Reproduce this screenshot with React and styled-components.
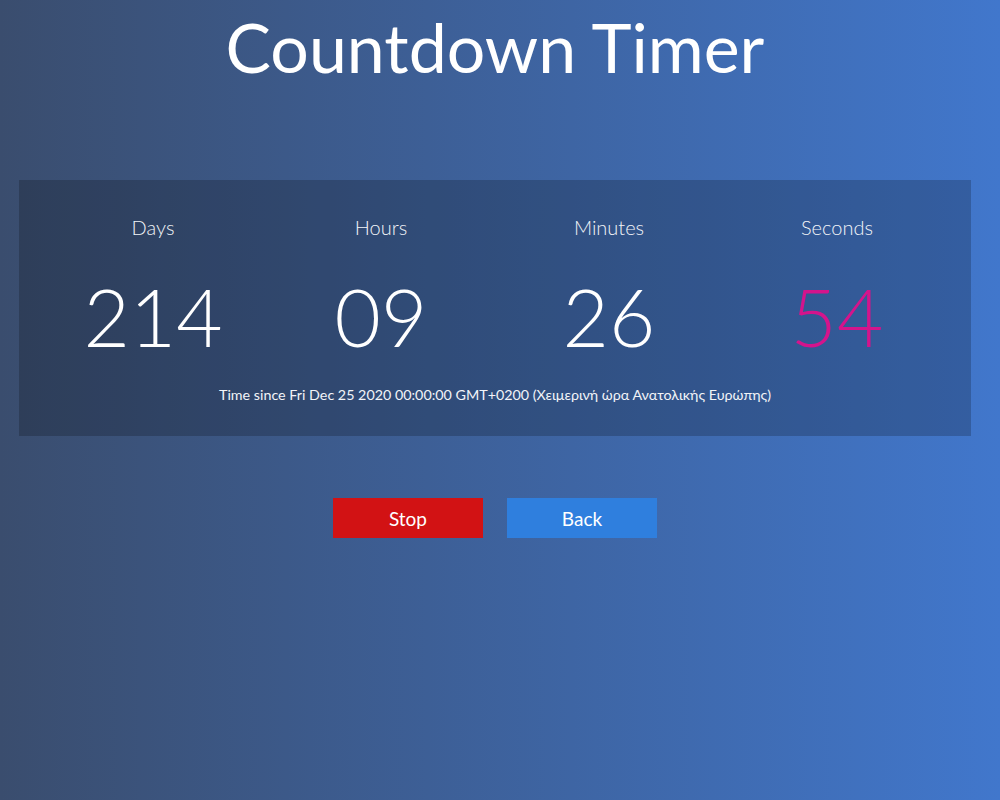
import React from 'react';
import styled, { createGlobalStyle } from 'styled-components';

const GlobalStyle = createGlobalStyle`
  html, body {
    margin: 0;
    padding: 0;
  }
  body {
    font-family: 'Lato', 'Noto Sans', sans-serif;
    color: #fff;
  }
`;

const Page = styled.div`
  min-height: 100vh;
  background: linear-gradient(to right, #3a4d6e, #4177cc);
  padding-right: 10px;
  box-sizing: border-box;
  overflow: hidden;
`;

const Title = styled.h1`
  margin: 8px 0 0;
  font-family: 'Lato', sans-serif;
  font-weight: 400;
  font-size: 68px;
  line-height: 78px;
  text-align: center;
  color: #fff;
`;

const Panel = styled.section`
  margin: 94px 19px 0;
  padding: 35px 20px 33px;
  background: rgba(0, 0, 0, 0.2);
`;

const Units = styled.div`
  display: grid;
  grid-template-columns: repeat(4, 1fr);
`;

const Unit = styled.div`
  display: flex;
  flex-direction: column;
  align-items: center;
`;

const Label = styled.span`
  font-size: 20px;
  font-weight: 300;
  line-height: 24px;
  color: #f2f4f8;
`;

const Value = styled.span`
  margin-top: 37px;
  font-size: 80px;
  font-weight: 300;
  line-height: 80px;
  color: ${props => props.accent || '#fff'};
`;

const Caption = styled.p`
  margin: 30px 0 0;
  font-size: 14.3px;
  line-height: 17px;
  text-align: center;
  color: #f2f4f8;
`;

const ButtonRow = styled.div`
  display: flex;
  justify-content: center;
  gap: 24px;
  margin-top: 62px;
`;

const Button = styled.button`
  width: 150px;
  height: 40px;
  border: none;
  border-radius: 0;
  background: ${props => props.bg};
  color: #fff;
  font-family: 'Lato', sans-serif;
  font-size: 19px;
  cursor: pointer;
`;

const units = [
  { label: 'Days', value: '214' },
  { label: 'Hours', value: '09' },
  { label: 'Minutes', value: '26' },
  { label: 'Seconds', value: '54', accent: '#d4148c' },
];

export default function App() {
  return (
    <>
      <GlobalStyle />
      <Page>
        <Title>Countdown Timer</Title>
        <Panel>
          <Units>
            {units.map(u => (
              <Unit key={u.label}>
                <Label>{u.label}</Label>
                <Value accent={u.accent}>{u.value}</Value>
              </Unit>
            ))}
          </Units>
          <Caption>
            Time since Fri Dec 25 2020 00:00:00 GMT+0200 (Χειμερινή ώρα Ανατολικής Ευρώπης)
          </Caption>
        </Panel>
        <ButtonRow>
          <Button bg="#d21214">Stop</Button>
          <Button bg="#2f7fde">Back</Button>
        </ButtonRow>
      </Page>
    </>
  );
}
